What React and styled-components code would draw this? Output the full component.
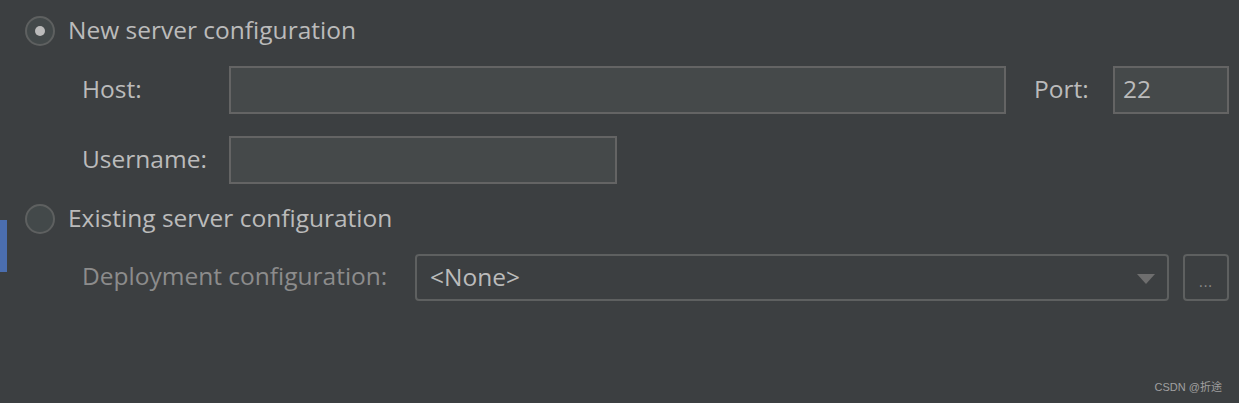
import React from 'react';
import styled, { createGlobalStyle } from 'styled-components';

const Global = createGlobalStyle`
    html, body {
        margin: 0;
        padding: 0;
        background: #3c3f41;
    }
    body {
        font-family: 'Open Sans', 'Noto Sans', sans-serif;
        color: #bbbbbb;
    }
`;

const Page = styled.div`
    position: relative;
    width: 1239px;
    height: 403px;
    box-sizing: border-box;
    padding: 16px 10px 0 0;
    background: #3c3f41;
    overflow: hidden;
`;

const SideMark = styled.div`
    position: absolute;
    left: 0;
    top: 220px;
    width: 7px;
    height: 52px;
    background: #4b6eaf;
`;

const RadioRow = styled.label`
    display: flex;
    align-items: center;
    gap: 13px;
    margin-left: 25px;
    margin-top: ${p => p.$top || 0}px;
    height: 30px;
    font-size: 24.5px;
    color: #bbbbbb;
`;

const RadioText = styled.span`
    padding-bottom: 3px;
`;

const Circle = styled.span`
    box-sizing: border-box;
    flex: none;
    width: 30px;
    height: 30px;
    border-radius: 50%;
    border: 2px solid #5e6060;
    background: #43494a;
    display: flex;
    align-items: center;
    justify-content: center;
    &::after {
        content: '';
        width: 10px;
        height: 10px;
        border-radius: 50%;
        background: ${p => (p.$checked ? '#bbbbbb' : 'transparent')};
    }
`;

const FieldRow = styled.div`
    display: flex;
    align-items: center;
    margin-left: 82px;
    margin-top: ${p => p.$top || 0}px;
    height: ${p => p.$h || 48}px;
`;

const Label = styled.span`
    width: ${p => p.$w}px;
    flex: none;
    font-size: 24.5px;
    padding-bottom: 4px;
    white-space: nowrap;
    color: ${p => (p.$dim ? '#8c8c8c' : '#bbbbbb')};
`;

const TextBox = styled.div`
    box-sizing: border-box;
    width: ${p => p.$w}px;
    height: 48px;
    flex: none;
    border: 2px solid #646464;
    background: #45494a;
    display: flex;
    align-items: center;
    padding: 0 0 3px 8px;
    font-size: 24.5px;
    color: #bbbbbb;
`;

const Combo = styled.div`
    box-sizing: border-box;
    width: 754px;
    height: 47px;
    flex: none;
    border: 2px solid #5e6060;
    border-radius: 4px;
    background: #3c3f41;
    display: flex;
    align-items: center;
    justify-content: space-between;
    padding: 0 12px 0 13px;
    font-size: 24.5px;
    color: #bbbbbb;
`;

const ComboText = styled.span`
    padding-bottom: 3px;
`;

const Arrow = styled.span`
    width: 0;
    height: 0;
    border-left: 9px solid transparent;
    border-right: 9px solid transparent;
    border-top: 10px solid #6e6e6e;
    margin-top: 2px;
`;

const DotsButton = styled.div`
    box-sizing: border-box;
    width: 47px;
    height: 47px;
    margin-left: 14px;
    border: 2px solid #5e6060;
    border-radius: 4px;
    display: flex;
    align-items: flex-end;
    justify-content: center;
    padding-bottom: 10px;
    font-size: 14px;
    line-height: 1;
    letter-spacing: 1px;
    color: #8c8c8c;
`;

const Watermark = styled.span`
    position: absolute;
    right: 17px;
    bottom: 9px;
    font-family: 'Liberation Sans', 'Noto Sans CJK SC', sans-serif;
    font-size: 11px;
    color: #a0a0a0;
`;

export default function App() {
    return (
        <Page>
            <Global />
            <SideMark />
            <RadioRow>
                <Circle $checked />
                <RadioText>New server configuration</RadioText>
            </RadioRow>
            <FieldRow $top={20}>
                <Label $w={147}>Host:</Label>
                <TextBox $w={777} />
                <Label $w={79} style={{ marginLeft: 28 }}>Port:</Label>
                <TextBox $w={116}>22</TextBox>
            </FieldRow>
            <FieldRow $top={22}>
                <Label $w={147}>Username:</Label>
                <TextBox $w={388} />
            </FieldRow>
            <RadioRow $top={20}>
                <Circle />
                <RadioText>Existing server configuration</RadioText>
            </RadioRow>
            <FieldRow $top={20} $h={47}>
                <Label $w={333} $dim>Deployment configuration:</Label>
                <Combo>
                    <ComboText>&lt;None&gt;</ComboText>
                    <Arrow />
                </Combo>
                <DotsButton>...</DotsButton>
            </FieldRow>
            <Watermark>CSDN @折途</Watermark>
        </Page>
    );
}
